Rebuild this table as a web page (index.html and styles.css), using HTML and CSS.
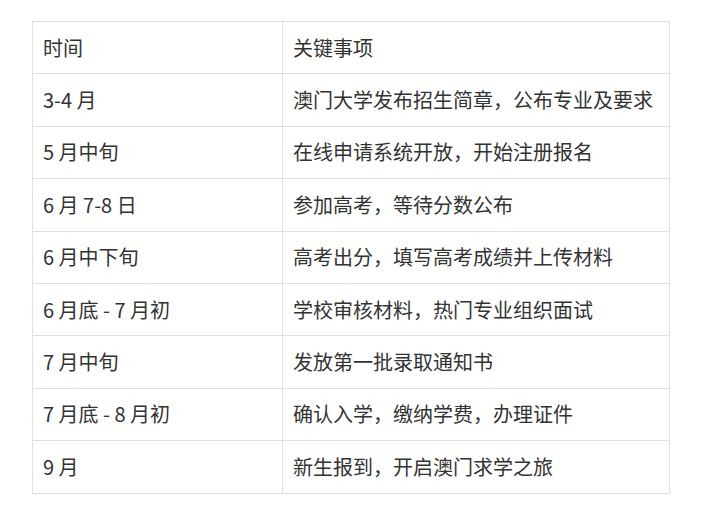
FILE: index.html
```html
<!DOCTYPE html>
<html lang="zh">
<head>
<meta charset="utf-8">
<link rel="stylesheet" href="styles.css">
</head>
<body>
<table class="schedule">
  <tr><td class="c-time">时间</td><td class="c-item">关键事项</td></tr>
  <tr><td class="c-time">3-4 月</td><td class="c-item">澳门大学发布招生简章，公布专业及要求</td></tr>
  <tr><td class="c-time">5 月中旬</td><td class="c-item">在线申请系统开放，开始注册报名</td></tr>
  <tr><td class="c-time">6 月 7-8 日</td><td class="c-item">参加高考，等待分数公布</td></tr>
  <tr><td class="c-time">6 月中下旬</td><td class="c-item">高考出分，填写高考成绩并上传材料</td></tr>
  <tr><td class="c-time">6 月底 - 7 月初</td><td class="c-item">学校审核材料，热门专业组织面试</td></tr>
  <tr><td class="c-time">7 月中旬</td><td class="c-item">发放第一批录取通知书</td></tr>
  <tr><td class="c-time">7 月底 - 8 月初</td><td class="c-item">确认入学，缴纳学费，办理证件</td></tr>
  <tr><td class="c-time">9 月</td><td class="c-item">新生报到，开启澳门求学之旅</td></tr>
</table>
</body>
</html>
```
FILE: styles.css
```css
html, body {
  margin: 0;
  padding: 0;
  background: #ffffff;
}
body {
  padding: 21px 0 0 32px;
  font-family: "Microsoft YaHei", "Noto Sans CJK SC", "Noto Sans", sans-serif;
  color: #333333;
}
.schedule {
  border-collapse: collapse;
  width: 638px;
  table-layout: fixed;
}
.schedule td {
  border: 1px solid #dfdfdf;
  padding: 0 10px;
  height: 51.4px;
  font-size: 20px;
  line-height: 28px;
  vertical-align: middle;
  white-space: nowrap;
}
.c-time {
  width: 229px;
}
```
